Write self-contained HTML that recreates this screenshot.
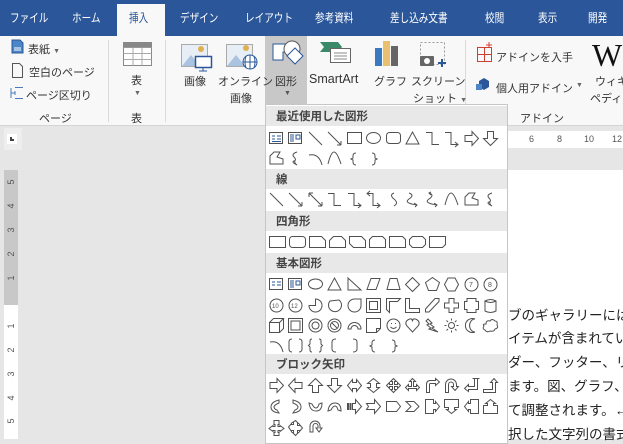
<!DOCTYPE html>
<html><head><meta charset="utf-8"><style>
*{margin:0;padding:0;box-sizing:border-box}
body{width:623px;height:439px;overflow:hidden;position:relative;background:#e6e6e6;font-family:"Liberation Sans","Noto Sans CJK JP",sans-serif;font-size:11px;color:#333}
.a{position:absolute;white-space:nowrap}
.tabbar{position:absolute;left:0;top:0;width:623px;height:36px;background:#2b579a}
.tab{position:absolute;top:9px;color:#fff;font-size:12px;white-space:nowrap;transform:scaleX(0.8);transform-origin:left}
.rib{position:absolute;left:0;top:36px;width:623px;height:90px;background:#f8f8f8;border-bottom:1px solid #d4d4d4}
.sep{position:absolute;top:40px;width:1px;height:82px;background:#dadada}
.dd{position:absolute;left:265px;top:104px;width:243px;height:340px;background:#fff;border:1px solid #c6c6c6}
.hd{position:absolute;left:266px;width:241px;height:20px;background:#e8e8e8;font-weight:bold;font-size:11.5px;color:#444;padding:2px 0 0 10px}
svg.r{position:absolute;left:266px}
.doc{position:absolute;left:508px;font-size:13.5px;color:#222;white-space:nowrap}
.vn{position:absolute;left:4px;width:14px;text-align:center;transform:rotate(-90deg);font-size:9px;color:#555}
</style></head><body>
<div class="tabbar"></div>
<div style="position:absolute;left:117px;top:4px;width:48px;height:33px;background:#f8f8f8"></div>
<div class="tab" style="left:10px">ファイル</div>
<div class="tab" style="left:72px">ホーム</div>
<div class="tab" style="left:129px;color:#2b579a">挿入</div>
<div class="tab" style="left:180px">デザイン</div>
<div class="tab" style="left:245px">レイアウト</div>
<div class="tab" style="left:315px">参考資料</div>
<div class="tab" style="left:390px">差し込み文書</div>
<div class="tab" style="left:485px">校閲</div>
<div class="tab" style="left:538px">表示</div>
<div class="tab" style="left:588px">開発</div>

<div class="rib"></div>
<div style="position:absolute;left:265px;top:36px;width:42px;height:68px;background:#c8c8c8"></div>
<div class="sep" style="left:108px"></div>
<div class="sep" style="left:165px"></div>
<div class="sep" style="left:465px"></div>

<svg class="a" style="left:0;top:36px" width="623" height="70">
<g fill="none" stroke-width="1">
<path d="M12 4h8l3 3v10H12z" fill="#4a86c8" stroke="#2b579a"/><path d="M14 12h7M14 14h7" stroke="#fff"/>
<path d="M12.5 27.5h7l3 3v11h-10z" stroke="#555"/>
<path d="M11 52v10M11 57h4M15 51.5h8M15 62.5h8M15 55v4" stroke="#4a7ab8"/>
<rect x="123.5" y="6.5" width="28" height="23" stroke="#888" fill="#fff"/><path d="M123.5 11.5h28M123.5 17.5h28M123.5 23.5h28M133 6.5v23M142 6.5v23" stroke="#aaa"/><rect x="123.5" y="6.5" width="28" height="5" fill="#888"/>
<rect x="181.5" y="8.5" width="26" height="22" fill="#e8eef5" stroke="#aaa"/><path d="M182 30l9-11 9 11z" fill="#a9c3e0"/><circle cx="201" cy="13" r="3" fill="#e0b050"/><rect x="195.5" y="20.5" width="16" height="11" fill="#fff" stroke="#2b579a" stroke-width="1.5"/><path d="M203 32v3M199 35h8" stroke="#2b579a"/>
<rect x="226.5" y="8.5" width="26" height="22" fill="#e8eef5" stroke="#aaa"/><path d="M227 30l9-11 9 11z" fill="#a9c3e0"/><circle cx="246" cy="12" r="3" fill="#e0b050"/><circle cx="250" cy="26" r="7" fill="#fff" stroke="#2b579a"/><path d="M243 26h14M250 19v14M246 20q-2 6 0 12M254 20q2 6 0 12" stroke="#2b579a"/>
<path d="M273 8h15v8l-5 0v8h-10z" stroke="#2b579a" fill="#fff"/><circle cx="292" cy="13" r="8" stroke="#555" fill="#fff"/><path d="M287 20l8-8 8 8-8 8z" stroke="#2b579a" fill="#fff"/>
<path d="M320 6h18l4 5-4 5h-18l4-5z" fill="#3a8a6a"/><rect x="330.5" y="12.5" width="20" height="14" fill="#fff" stroke="#666"/><path d="M334 17h13M334 20h13M334 23h13" stroke="#888"/>
<rect x="375" y="12" width="7" height="18" fill="#3a78c0"/><rect x="383" y="5" width="7" height="25" fill="#e8c070"/><rect x="391" y="10" width="7" height="20" fill="#666"/>
<rect x="420.5" y="6.5" width="24" height="22" stroke="#999" stroke-dasharray="2 2"/><rect x="420" y="20" width="14" height="10" fill="#666" rx="1"/><circle cx="427" cy="25" r="3" fill="#fff"/><path d="M438 27h8M442 23v8" stroke="#2b579a" stroke-width="2"/>
<rect x="477.5" y="11.5" width="14" height="14" stroke="#d04030"/><path d="M477 18.5h15M484.5 11v15M489 6v6M486 9h6" stroke="#d04030"/>
<path d="M479 45l5-3 5 3v6l-5 3-5-3z" fill="#2b579a"/><rect x="476" y="48" width="6" height="6" fill="#4a86c8"/>
</g>
<text x="592" y="30" font-family="Liberation Serif,serif" font-size="32" fill="#111">W</text>
</svg>
<div class="a" style="left:28px;top:41px">表紙 <span style="font-size:7px;color:#666">▼</span></div>
<div class="a" style="left:29px;top:64px">空白のページ</div>
<div class="a" style="left:26px;top:87px">ページ区切り</div>
<div class="a" style="left:39px;top:110px">ページ</div>
<div class="a" style="left:131px;top:72px">表</div>
<div class="a" style="left:134px;top:90px;font-size:7px;color:#666">▼</div>
<div class="a" style="left:131px;top:110px">表</div>
<div class="a" style="left:184px;top:73px">画像</div>
<div class="a" style="left:218px;top:73px">オンライン</div>
<div class="a" style="left:230px;top:90px">画像</div>
<div class="a" style="left:275px;top:73px">図形</div>
<div class="a" style="left:284px;top:90px;font-size:7px;color:#555">▼</div>
<div class="a" style="left:309px;top:72px;font-size:12.5px">SmartArt</div>
<div class="a" style="left:374px;top:73px">グラフ</div>
<div class="a" style="left:411px;top:73px">スクリーン</div>
<div class="a" style="left:413px;top:90px">ショット <span style="font-size:7px;color:#666">▼</span></div>
<div class="a" style="left:496px;top:49px">アドインを入手</div>
<div class="a" style="left:496px;top:80px">個人用アドイン</div>
<div class="a" style="left:576px;top:82px;font-size:7px;color:#666">▼</div>
<div class="a" style="left:595px;top:73px">ウィキ</div>
<div class="a" style="left:590px;top:90px">ペディア</div>
<div class="a" style="left:520px;top:110px">アドイン</div>

<div style="position:absolute;left:4px;top:128px;width:18px;height:22px;background:#eee"></div>
<div style="position:absolute;left:7px;top:134px;width:10px;height:10px;background:#fff"></div>
<div style="position:absolute;left:10px;top:137px;width:4px;height:4px;border-left:2px solid #444;border-bottom:2px solid #444"></div>
<div style="position:absolute;left:490px;top:131px;width:133px;height:17px;background:#fff"></div>
<div class="a" style="left:529px;top:134px;font-size:9px;color:#555">6</div>
<div class="a" style="left:557px;top:134px;font-size:9px;color:#555">8</div>
<div class="a" style="left:584px;top:134px;font-size:9px;color:#555">10</div>
<div class="a" style="left:612px;top:134px;font-size:9px;color:#555">12</div>
<div style="position:absolute;left:490px;top:170px;width:133px;height:269px;background:#fff"></div>
<div style="position:absolute;left:4px;top:170px;width:14px;height:135px;background:#c8c8c8"></div>
<div style="position:absolute;left:4px;top:305px;width:14px;height:134px;background:#fff"></div>
<div class="vn" style="top:177px">5</div><div class="vn" style="top:201px">4</div><div class="vn" style="top:225px">3</div><div class="vn" style="top:249px">2</div><div class="vn" style="top:273px">1</div>
<div class="vn" style="top:321px">1</div><div class="vn" style="top:345px">2</div><div class="vn" style="top:369px">3</div><div class="vn" style="top:393px">4</div><div class="vn" style="top:416px">5</div>

<div class="doc" style="top:304px">ブのギャラリーにはさ</div>
<div class="doc" style="top:327px">イテムが含まれてい</div>
<div class="doc" style="top:351px">ダー、フッター、リ</div>
<div class="doc" style="top:375px">ます。図、グラフ、</div>
<div class="doc" style="top:399px">て調整されます。←</div>
<div class="doc" style="top:423px">択した文字列の書式</div>

<div class="dd"></div>
<div class="hd" style="top:106px">最近使用した図形</div>
<div class="hd" style="top:169px">線</div>
<div class="hd" style="top:211px">四角形</div>
<div class="hd" style="top:253px">基本図形</div>
<div class="hd" style="top:354px">ブロック矢印</div>

<svg class="r" style="top:128px" width="240" height="40" fill="none" stroke="#505050">
<g transform="translate(3,3)"><rect x=".5" y="1.5" width="13" height="11"/><path d="M3 5h3M3 8h3M8 5h4M8 8h4M3 10.5h9" stroke="#2b579a"/></g>
<g transform="translate(22,3)"><rect x=".5" y="1.5" width="13" height="11"/><path d="M3 3v8M5 3v8M8 4h4v4h-4z" stroke="#2b579a"/></g>
<g transform="translate(42,3)"><path d="M1 1l13 13"/></g>
<g transform="translate(61,3)"><path d="M1 1l13 13M14 14h-4M14 14v-4"/></g>
<g transform="translate(81,3)"><rect x=".5" y="1.5" width="14" height="11"/></g>
<g transform="translate(100,3)"><ellipse cx="7.5" cy="7" rx="7" ry="5.5"/></g>
<g transform="translate(120,3)"><rect x=".5" y="1.5" width="14" height="11" rx="3"/></g>
<g transform="translate(139,3)"><path d="M7.5 1L14 13H1z"/></g>
<g transform="translate(159,3)"><path d="M1 1.5h6v12h7"/></g>
<g transform="translate(178,3)"><path d="M1 1.5h6v12h7M11 11l3 2.5-3 2.5"/></g>
<g transform="translate(198,3)"><path d="M1 4.5h7v-4l6.5 7-6.5 7v-4h-7z"/></g>
<g transform="translate(217,3)"><path d="M4.5 .5h6v7h4l-7 7-7-7h4z"/></g>
<g transform="translate(3,23)"><path d="M1 13V5l4-4h6l-3 5 6 2v5z"/></g>
<g transform="translate(22,23)"><path d="M9 1q-6 2-3 5t0 4 3 4q-3-2-2-4"/></g>
<g transform="translate(42,23)"><path d="M1 4q10-2 13 10"/></g>
<g transform="translate(61,23)"><path d="M1 13q3-12 6-12t7 12"/></g>
<g transform="translate(81,23)"><path d="M9 2q-3 0-3 3v2l-2 1 2 1v2q0 3 3 3"/></g>
<g transform="translate(100,23)"><path d="M6 2q3 0 3 3v2l2 1-2 1v2q0 3-3 3"/></g>
</svg>
<svg class="r" style="top:189px" width="240" height="20" fill="none" stroke="#505050">
<g transform="translate(3,3)"><path d="M1 1l13 13"/></g>
<g transform="translate(22,3)"><path d="M1 1l13 13M14 14h-4M14 14v-4"/></g>
<g transform="translate(42,3)"><path d="M1 1l13 13M14 14h-4M14 14v-4M1 1h4M1 1v4"/></g>
<g transform="translate(61,3)"><path d="M1 1.5h6v12h7"/></g>
<g transform="translate(81,3)"><path d="M1 1.5h6v12h7M11 11l3 2.5-3 2.5"/></g>
<g transform="translate(100,3)"><path d="M1 1.5h6v12h7M11 11l3 2.5-3 2.5M4 -1l-3 2.5 3 2.5"/></g>
<g transform="translate(120,3)"><path d="M8 1q-5 2 0 6t0 7"/></g>
<g transform="translate(139,3)"><path d="M4 1q6 2 0 6t8 6M9 11l3 2-2 2"/></g>
<g transform="translate(159,3)"><path d="M4 1q6 2 0 6t8 6M9 11l3 2-2 2M6 0l-2 1 2 2"/></g>
<g transform="translate(178,3)"><path d="M1 13q3-12 6-12t7 12"/></g>
<g transform="translate(198,3)"><path d="M1 13V5l4-4h6l-3 5 6 2v5z"/></g>
<g transform="translate(217,3)"><path d="M9 1q-6 2-3 5t0 4 3 4q-3-2-2-4"/></g>
</svg>
<svg class="r" style="top:232px" width="240" height="20" fill="none" stroke="#505050">
<g transform="translate(3,3)"><rect x=".5" y="1.5" width="16" height="11"/></g>
<g transform="translate(23,3)"><rect x=".5" y="1.5" width="16" height="11" rx="3"/></g>
<g transform="translate(43,3)"><path d="M.5 1.5h12l4 4v7H.5z"/></g>
<g transform="translate(63,3)"><path d="M4.5 1.5h8l4 4v7H.5v-7z"/></g>
<g transform="translate(83,3)"><path d="M.5 1.5h12l4 4v7H4.5l-4-4z"/></g>
<g transform="translate(103,3)"><path d="M3.5 1.5h10l3 3v8H.5v-8z"/></g>
<g transform="translate(123,3)"><path d="M.5 1.5h13l3 3v8H.5z"/></g>
<g transform="translate(143,3)"><path d="M3.5 1.5h10l3 3v5l-3 3h-10l-3-3v-5z"/></g>
<g transform="translate(163,3)"><path d="M.5 1.5h16v8l-3 3H.5z"/></g>
</svg>
<svg class="r" style="top:274px" width="240" height="84" fill="none" stroke="#505050">
<g transform="translate(3,3)"><rect x=".5" y="1.5" width="13" height="11"/><path d="M3 5h3M3 8h3M8 5h4M8 8h4" stroke="#2b579a"/></g>
<g transform="translate(22,3)"><rect x=".5" y="1.5" width="13" height="11"/><path d="M3 3v8M5 3v8M8 4h4v4h-4z" stroke="#2b579a"/></g>
<g transform="translate(42,3)"><ellipse cx="7.5" cy="7" rx="7" ry="5"/></g>
<g transform="translate(61,3)"><path d="M7.5 1L14 13H1z"/></g>
<g transform="translate(81,3)"><path d="M1 1v12h13z"/></g>
<g transform="translate(100,3)"><path d="M5 1.5h9l-4 11H1z"/></g>
<g transform="translate(120,3)"><path d="M4 1.5h7l3 11H1z"/></g>
<g transform="translate(139,3)"><path d="M7.5 .5l7 7-7 7-7-7z"/></g>
<g transform="translate(159,3)"><path d="M7.5 .5l7 5-3 8h-8l-3-8z"/></g>
<g transform="translate(178,3)"><path d="M4 1h7l3.5 6.5L11 14H4L.5 7.5z"/></g>
<g transform="translate(198,3)"><circle cx="7.5" cy="7.5" r="6.5"/><text x="5" y="10" font-size="7" fill="#505050" stroke="none">7</text></g>
<g transform="translate(217,3)"><circle cx="7.5" cy="7.5" r="6.5"/><text x="5" y="10" font-size="7" fill="#505050" stroke="none">8</text></g>
<g transform="translate(3,24)"><circle cx="7.5" cy="7.5" r="6.5"/><text x="3" y="10" font-size="6" fill="#505050" stroke="none">10</text></g>
<g transform="translate(22,24)"><circle cx="7.5" cy="7.5" r="6.5"/><text x="3" y="10" font-size="6" fill="#505050" stroke="none">12</text></g>
<g transform="translate(42,24)"><path d="M7.5 7.5V1A6.5 6.5 0 1 1 1 7.5z"/></g>
<g transform="translate(61,24)"><path d="M3 3A6.5 6.5 0 1 0 12 2z"/></g>
<g transform="translate(81,24)"><path d="M7.5 1H14v6.5A6.5 6.5 0 1 1 7.5 1z"/></g>
<g transform="translate(100,24)"><rect x=".5" y=".5" width="14" height="14"/><rect x="3.5" y="3.5" width="8" height="8"/></g>
<g transform="translate(120,24)"><path d="M.5 .5h14l-3 3h-8v11l-3-3z"/></g>
<g transform="translate(139,24)"><path d="M.5 .5h4v10h10v4H.5z"/></g>
<g transform="translate(159,24)"><path d="M10 .5h4v3L4 14H.5v-3z"/></g>
<g transform="translate(178,24)"><path d="M5 .5h5v4.5h4.5v5H10v4.5H5V10H.5V5H5z"/></g>
<g transform="translate(198,24)"><path d="M3 .5h9v3h2.5v8H12v3H3v-3H.5v-8H3z"/></g>
<g transform="translate(217,24)"><path d="M2 3v10q5.5 3 11 0V3q-5.5-3-11 0q5.5 3 11 0"/></g>
<g transform="translate(3,44)"><path d="M.5 4.5h10v10H.5zM.5 4.5l4-4h10l-4 4M14.5 .5v10l-4 4"/></g>
<g transform="translate(22,44)"><rect x=".5" y=".5" width="14" height="14"/><rect x="3" y="3" width="9" height="9"/></g>
<g transform="translate(42,44)"><circle cx="7.5" cy="7.5" r="6.5"/><circle cx="7.5" cy="7.5" r="3.5"/></g>
<g transform="translate(61,44)"><circle cx="7.5" cy="7.5" r="6.5"/><circle cx="7.5" cy="7.5" r="4"/><path d="M5 5l5 5"/></g>
<g transform="translate(81,44)"><path d="M1 11A6.5 6.5 0 0 1 14 11h-3A3.5 3.5 0 0 0 4 11z"/></g>
<g transform="translate(100,44)"><path d="M.5 .5h14v10l-4 4H.5zM10.5 14.5v-4h4"/></g>
<g transform="translate(120,44)"><circle cx="7.5" cy="7.5" r="6.5"/><path d="M4.5 9q3 3 6 0M5 5.5h1M9 5.5h1"/></g>
<g transform="translate(139,44)"><path d="M7.5 14L1.5 7.5q-2-4 2-6t4 2q0-4 4-2t2 6z"/></g>
<g transform="translate(159,44)"><path d="M3 1l4 4-2 1 4 3-2 1 6 4-9-3 2-1-4-3 2-1-3-3z"/></g>
<g transform="translate(178,44)"><circle cx="7.5" cy="7.5" r="3"/><path d="M7.5 .5v2M7.5 12.5v2M.5 7.5h2M12.5 7.5h2M2.5 2.5l1.5 1.5M11 11l1.5 1.5M2.5 12.5L4 11M11 4l1.5-1.5"/></g>
<g transform="translate(198,44)"><path d="M11 1A7 7 0 1 0 11 14A5 6 0 0 1 11 1z"/></g>
<g transform="translate(217,44)"><path d="M3 6q0-4 4-3 2-3 5 0 3 0 2 4 2 3-2 4-1 3-5 2-3 2-5-1-3-1-1-4-2-2 2-2z"/></g>
<g transform="translate(3,64)"><path d="M1 4q10-2 13 10"/></g>
<g transform="translate(22,64)"><path d="M4 1q-3 0-3 3v7q0 3 3 3M11 1q3 0 3 3v7q0 3-3 3"/></g>
<g transform="translate(42,64)"><path d="M4 1q-2 0-2 2v3l-1.5 1.5 1.5 1.5v3q0 2 2 2M11 1q2 0 2 2v3l1.5 1.5-1.5 1.5v3q0 2-2 2"/></g>
<g transform="translate(61,64)"><path d="M9 1q-4 0-4 3v7q0 3 4 3"/></g>
<g transform="translate(81,64)"><path d="M6 1q4 0 4 3v7q0 3-4 3"/></g>
<g transform="translate(100,64)"><path d="M9 2q-3 0-3 3v2l-2 1 2 1v2q0 3 3 3"/></g>
<g transform="translate(120,64)"><path d="M6 2q3 0 3 3v2l2 1-2 1v2q0 3-3 3"/></g>
</svg>
<svg class="r" style="top:375px" width="240" height="64" fill="none" stroke="#505050">
<g transform="translate(3,3)"><path d="M1 4.5h7v-4l6.5 7-6.5 7v-4h-7z"/></g>
<g transform="translate(22,3)"><path d="M14 4.5H7v-4L.5 7.5 7 14.5v-4h7z"/></g>
<g transform="translate(42,3)"><path d="M4.5 14.5v-7h-4l7-7 7 7h-4v7z"/></g>
<g transform="translate(61,3)"><path d="M4.5 .5h6v7h4l-7 7-7-7h4z"/></g>
<g transform="translate(81,3)"><path d="M.5 7.5l5-6v3h4v-3l5 6-5 6v-3h-4v3z"/></g>
<g transform="translate(100,3)"><path d="M7.5 .5l6 5h-3v4h3l-6 5-6-5h3v-4h-3z"/></g>
<g transform="translate(120,3)"><path d="M7.5 .5l3 3h-2v3h3v-2l3 3-3 3v-2h-3v3h2l-3 3-3-3h2v-3h-3v2l-3-3 3-3v2h3v-3h-2z"/></g>
<g transform="translate(139,3)"><path d="M7.5 .5l3 3h-2v5h3v-2l3 3-3 3v-2h-8v2l-3-3 3-3v2h3v-5h-2z"/></g>
<g transform="translate(159,3)"><path d="M1.5 14.5v-8q0-4 4-4h5v-2l4 3.5-4 3.5v-2h-5q-1 0-1 1v8z"/></g>
<g transform="translate(178,3)"><path d="M1.5 14.5v-8a5.5 5.5 0 0 1 11 0v2h2l-3.5 4-3.5-4h2v-2a2.5 2.5 0 0 0-5 0v8z"/></g>
<g transform="translate(198,3)"><path d="M.5 10.5l4-4v2h6v-8h-2l3.5-0 3.5 0h-2v11h-9v2z"/></g>
<g transform="translate(217,3)"><path d="M.5 14.5v-3h9v-7h-2l3.5-4 3.5 4h-2v10z"/></g>
<g transform="translate(3,24)"><path d="M10 1q-8 2-8 7t8 6l-2-3q-3-1-3-3t5-4z"/></g>
<g transform="translate(22,24)"><path d="M5 1q8 2 8 7t-8 6l2-3q3-1 3-3t-5-4z"/></g>
<g transform="translate(42,24)"><path d="M1 4q1 8 7 8t6-8l-3 1q-1 4-3 4t-4-4z"/></g>
<g transform="translate(61,24)"><path d="M1 12q1-8 7-8t6 8l-3-1q-1-4-3-4t-4 4z"/></g>
<g transform="translate(81,24)"><path d="M.5 4.5h1v6h-1zM3 4.5h1v6H3zM5.5 4.5h3v-4l6 7-6 7v-4h-3z"/></g>
<g transform="translate(100,24)"><path d="M.5 4.5h8v-4l6 7-6 7v-4h-8l2-3z"/></g>
<g transform="translate(120,24)"><path d="M.5 2.5h10l4 5-4 5H.5z"/></g>
<g transform="translate(139,24)"><path d="M1 2.5h8l5 5-5 5H1l5-5z"/></g>
<g transform="translate(159,24)"><path d="M.5 .5h8v4h2v-2l4 5-4 5v-2h-2v4h-8z"/></g>
<g transform="translate(178,24)"><path d="M.5 .5h14v8h-4v2h2l-5 4-5-4h2v-2h-4z"/></g>
<g transform="translate(198,24)"><path d="M14.5 .5h-8v4h-2v-2l-4 5 4 5v-2h2v4h8z"/></g>
<g transform="translate(217,24)"><path d="M.5 14.5h14v-8h-4v-2h2l-5-4-5 4h2v2h-4z"/></g>
<g transform="translate(3,45)"><path d="M5 .5h5v4h-1v2h2v-1l4 3-4 3v-1H9v2h1v3H5v-3h1v-2H4v1l-4-3 4-3v1h2v-2H5z"/></g>
<g transform="translate(22,45)"><path d="M7.5 .5l3 3h-1v2h2v-1l3 3.5-3 3.5v-1h-2v2h1l-3 3-3-3h1v-2h-2v1L.5 7l3-3.5v1h2v-2h-1z"/></g>
<g transform="translate(42,45)"><path d="M2 12V6a5 5 0 0 1 10 0v2h2l-3 4-3-4h2V6a2 2 0 0 0-5 0v6z"/></g>
</svg>
</body></html>
